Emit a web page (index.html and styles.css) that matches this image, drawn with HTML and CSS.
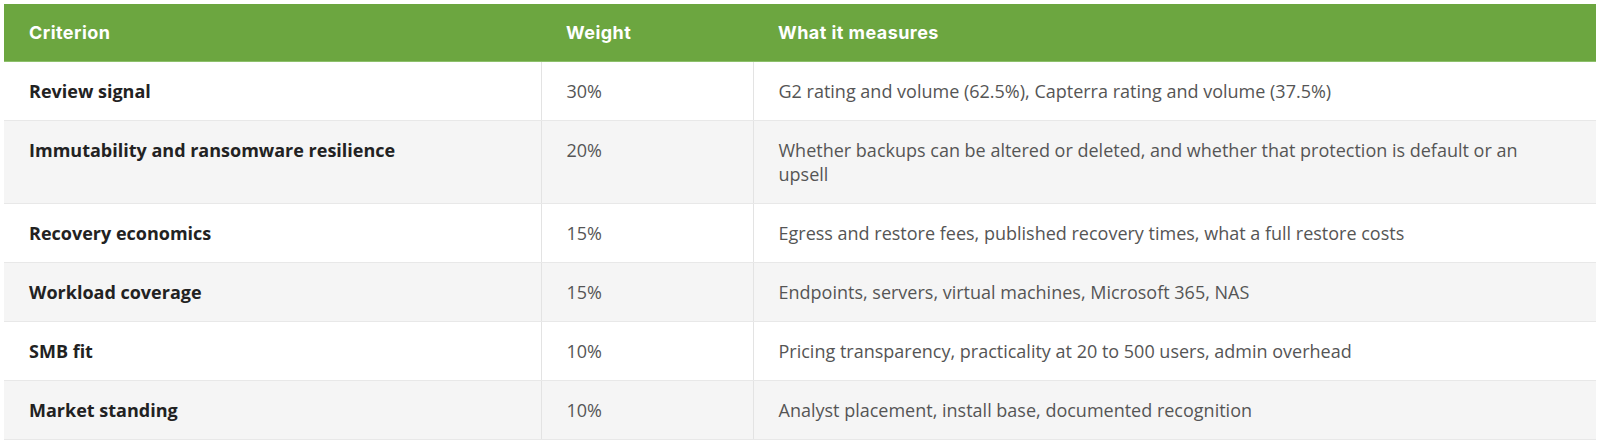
FILE: index.html
```html
<!DOCTYPE html>
<html lang="en">
<head>
<meta charset="utf-8">
<title>Criteria</title>
<link rel="stylesheet" href="styles.css">
</head>
<body>
<table class="criteria">
  <colgroup>
    <col class="c1"><col class="c2"><col class="c3">
  </colgroup>
  <thead>
    <tr><th>Criterion</th><th>Weight</th><th>What it measures</th></tr>
  </thead>
  <tbody>
    <tr><td class="name">Review signal</td><td>30%</td><td>G2 rating and volume (62.5%), Capterra rating and volume (37.5%)</td></tr>
    <tr><td class="name">Immutability and ransomware resilience</td><td>20%</td><td>Whether backups can be altered or deleted, and whether that protection is default or an upsell</td></tr>
    <tr><td class="name">Recovery economics</td><td>15%</td><td>Egress and restore fees, published recovery times, what a full restore costs</td></tr>
    <tr><td class="name">Workload coverage</td><td>15%</td><td>Endpoints, servers, virtual machines, Microsoft 365, NAS</td></tr>
    <tr><td class="name">SMB fit</td><td>10%</td><td>Pricing transparency, practicality at 20 to 500 users, admin overhead</td></tr>
    <tr><td class="name">Market standing</td><td>10%</td><td>Analyst placement, install base, documented recognition</td></tr>
  </tbody>
</table>
</body>
</html>
```

FILE: styles.css
```css
html, body {
  margin: 0;
  padding: 0;
  background: #ffffff;
}
body {
  padding: 4px 4px 0 4px;
  font-family: "Open Sans", "Noto Sans", sans-serif;
}
.criteria {
  width: 1592px;
  border-collapse: collapse;
  table-layout: fixed;
  font-size: 18px;
  line-height: 24px;
}
.c1 { width: 537px; }
.c2 { width: 212px; }
.c3 { width: 843px; }
.criteria th {
  background: #6ca640;
  color: #ffffff;
  text-align: left;
  font-family: "Inter", "Open Sans", sans-serif;
  font-weight: 700;
  font-size: 18px;
  letter-spacing: 0.45px;
  height: 57px;
  padding: 0 25px;
  border-bottom: 1px solid #8cc06a;
}
.criteria td {
  padding: 17px 25px;
  color: #555555;
  vertical-align: top;
  border-bottom: 1px solid #e8e8e8;
  border-left: 1px solid #e3e3e3;
}
.criteria td:first-child { border-left: none; }
.criteria td.name {
  font-weight: 700;
  color: #222222;
}
.criteria tbody tr:nth-child(even) td { background: #f5f5f5; }
```
